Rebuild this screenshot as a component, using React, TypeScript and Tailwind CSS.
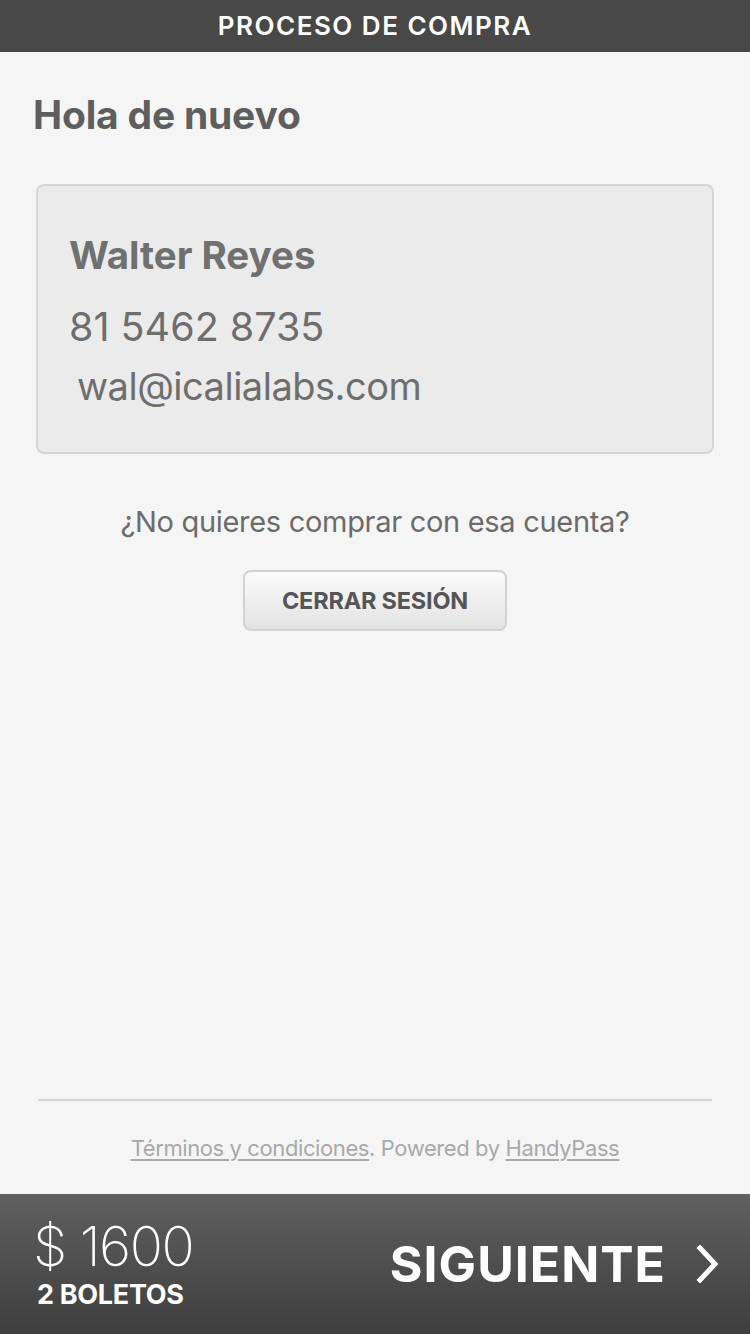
import React from "react";

export default function App() {
  return (
    <div
      className="w-[750px] h-[1334px] flex flex-col bg-[#f5f5f5]"
      style={{ fontFamily: "Inter, Roboto, 'Liberation Sans', sans-serif" }}
    >
      <div className="h-[52px] shrink-0 bg-[#484848] flex items-center justify-center">
        <span className="text-white font-semibold text-[26px] tracking-[1.5px] leading-none">
          PROCESO DE COMPRA
        </span>
      </div>

      <div className="flex-1 flex flex-col">
        <h1 className="mt-[40px] ml-[33px] text-[39px] font-bold text-[#5e5e5e] leading-[46px] tracking-[-0.2px]">
          Hola de nuevo
        </h1>

        <div className="mt-[46px] mx-[36px] h-[270px] rounded-[8px] border-2 border-[#d6d6d6] bg-[#ebebeb] pl-[31px] pt-[45px]">
          <div className="text-[38.5px] font-bold text-[#707070] leading-[48px]">
            Walter Reyes
          </div>
          <div className="mt-[24px] text-[39.5px] text-[#6e6e6e] leading-[48px]">
            81 5462 8735
          </div>
          <div className="mt-[11px] ml-[8px] text-[38px] text-[#6e6e6e] leading-[48px] tracking-[-0.5px]">
            wal@icalialabs.com
          </div>
        </div>

        <div className="mt-[49px] text-center text-[29px] text-[#6b6b6b] leading-[38px] tracking-[-0.3px]">
          ¿No quieres comprar con esa cuenta?
        </div>

        <div className="mt-[29px] flex justify-center">
          <button className="w-[264px] h-[61px] rounded-[8px] border-2 border-[#d2d2d2] bg-gradient-to-b from-[#fbfbfb] to-[#e3e3e3] text-[23.5px] font-bold text-[#555555] tracking-[-0.2px]">
            CERRAR SESIÓN
          </button>
        </div>

        <div className="flex-1" />

        <div className="mx-[38px] h-[2px] bg-[#d6d6d6]" />
        <div className="mt-[33px] mb-[32px] text-center text-[22px] text-[#a9a9a9] leading-[28px] tracking-[-0.4px]">
          <span className="underline underline-offset-[3px]">Términos y condiciones</span>. Powered by{" "}
          <span className="underline underline-offset-[3px]">HandyPass</span>
        </div>
      </div>

      <div className="h-[140px] shrink-0 bg-gradient-to-b from-[#606060] to-[#3e3e3e] flex items-center justify-between pl-[33px] pr-[30px]">
        <div className="flex flex-col text-white pb-[2px]">
          <div className="text-[55px] font-extralight leading-[56px] tracking-[-1.5px]">
            $ 1600
          </div>
          <div className="mt-[7px] ml-[4px] text-[27px] font-bold leading-[28px] tracking-[-0.3px]">
            2 BOLETOS
          </div>
        </div>
        <div className="flex items-center gap-[30px] text-white">
          <span className="text-[50px] font-bold leading-none tracking-[1px]">SIGUIENTE</span>
          <svg width="24" height="38" viewBox="0 0 24 38" fill="none">
            <path d="M4 3 L19 19 L4 35" stroke="white" strokeWidth="5" strokeLinecap="square" />
          </svg>
        </div>
      </div>
    </div>
  );
}
